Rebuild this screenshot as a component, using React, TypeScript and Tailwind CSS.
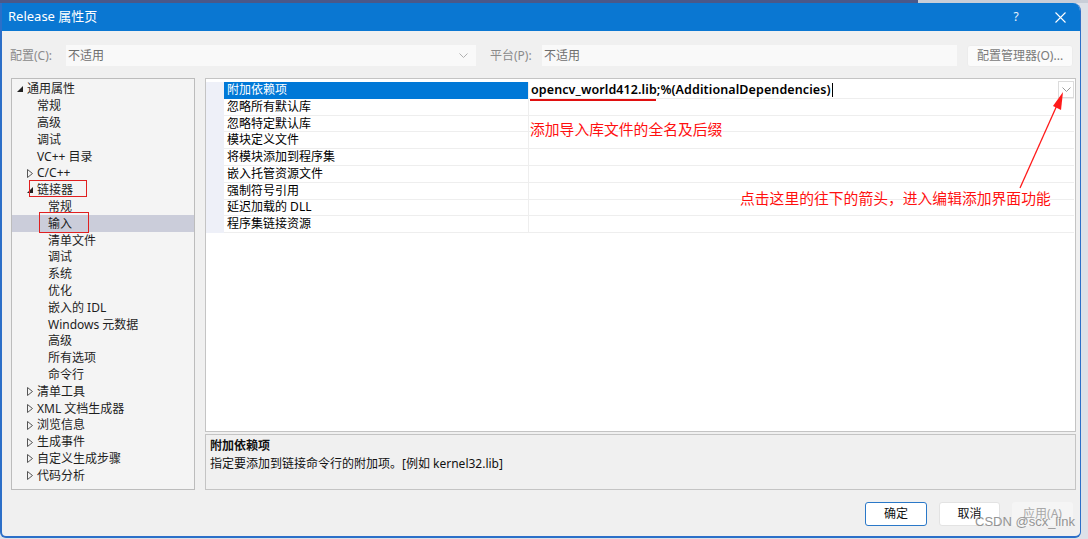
import React from 'react'

type TreeItem = { t: string; kind: 'root' | 'open' | 'closed' | 'leaf1' | 'leaf2' }

const treeItems: TreeItem[] = [
  { t: '通用属性', kind: 'root' },
  { t: '常规', kind: 'leaf1' },
  { t: '高级', kind: 'leaf1' },
  { t: '调试', kind: 'leaf1' },
  { t: 'VC++ 目录', kind: 'leaf1' },
  { t: 'C/C++', kind: 'closed' },
  { t: '链接器', kind: 'open' },
  { t: '常规', kind: 'leaf2' },
  { t: '输入', kind: 'leaf2' },
  { t: '清单文件', kind: 'leaf2' },
  { t: '调试', kind: 'leaf2' },
  { t: '系统', kind: 'leaf2' },
  { t: '优化', kind: 'leaf2' },
  { t: '嵌入的 IDL', kind: 'leaf2' },
  { t: 'Windows 元数据', kind: 'leaf2' },
  { t: '高级', kind: 'leaf2' },
  { t: '所有选项', kind: 'leaf2' },
  { t: '命令行', kind: 'leaf2' },
  { t: '清单工具', kind: 'closed' },
  { t: 'XML 文档生成器', kind: 'closed' },
  { t: '浏览信息', kind: 'closed' },
  { t: '生成事件', kind: 'closed' },
  { t: '自定义生成步骤', kind: 'closed' },
  { t: '代码分析', kind: 'closed' },
]

const props = [
  '附加依赖项',
  '忽略所有默认库',
  '忽略特定默认库',
  '模块定义文件',
  '将模块添加到程序集',
  '嵌入托管资源文件',
  '强制符号引用',
  '延迟加载的 DLL',
  '程序集链接资源',
]

function OpenTri() {
  return (
    <svg width="6" height="6" viewBox="0 0 6 6" className="shrink-0">
      <polygon points="6,0 6,6 0,6" fill="#222" />
    </svg>
  )
}

function ClosedTri() {
  return (
    <svg width="6" height="9" viewBox="0 0 6 9" className="shrink-0">
      <polygon points="0.5,0.5 5.5,4.5 0.5,8.5" fill="none" stroke="#555" strokeWidth="1" />
    </svg>
  )
}

function Chevron({ color = '#b0b0b0' }: { color?: string }) {
  return (
    <svg width="9" height="5" viewBox="0 0 9 5">
      <polyline points="0.5,0.5 4.5,4.5 8.5,0.5" fill="none" stroke={color} strokeWidth="1" />
    </svg>
  )
}

function TreeRow({ item, selected }: { item: TreeItem; selected: boolean }) {
  const base = 'h-[16.8px] flex items-center text-[12px] text-[#1e1e1e] whitespace-nowrap'
  const bg = selected ? ' bg-[#cbcdda]' : ''
  if (item.kind === 'root')
    return (
      <div className={base + bg + ' pl-[5px]'}>
        <div className="w-[10px] flex items-center"><OpenTri /></div>
        <span>{item.t}</span>
      </div>
    )
  if (item.kind === 'open')
    return (
      <div className={base + bg + ' pl-[15px]'}>
        <div className="w-[10px] flex items-center"><OpenTri /></div>
        <span>{item.t}</span>
      </div>
    )
  if (item.kind === 'closed')
    return (
      <div className={base + bg + ' pl-[15px]'}>
        <div className="w-[10px] flex items-center"><ClosedTri /></div>
        <span>{item.t}</span>
      </div>
    )
  if (item.kind === 'leaf1') return <div className={base + bg + ' pl-[25px]'}>{item.t}</div>
  return <div className={base + bg + ' pl-[36px]'}>{item.t}</div>
}

export default function App() {
  return (
    <div className="relative w-[1088px] h-[539px] overflow-hidden bg-[#dde1e8] font-['Noto_Sans','Noto_Sans_CJK_SC',sans-serif]">
      <div className="flex h-[3px]">
        <div className="w-[918px] bg-[#4a5889]" />
        <div className="flex-1 bg-[#c9ced8]" />
      </div>

      <div className="mr-[7px] h-[535px] flex flex-col overflow-hidden rounded-tr-[8px] rounded-b-[6px] border-l-2 border-b-2 border-r border-[#2c6fc8] bg-[#f0f0f0]">
        {/* title bar */}
        <div className="h-[28px] shrink-0 flex items-center bg-[#0a77d2] text-white">
          <span className="pl-[6px] text-[13px]">Release 属性页</span>
          <div className="ml-auto flex items-center gap-[8px] pr-[2px]">
            <span className="w-[36px] text-center text-[12px] text-[#e8f1fb]">?</span>
            <div className="w-[36px] flex justify-center">
              <svg width="11" height="11" viewBox="0 0 11 11">
                <path d="M0.5 0.5 L10.5 10.5 M10.5 0.5 L0.5 10.5" stroke="#fff" strokeWidth="1.1" />
              </svg>
            </div>
          </div>
        </div>

        {/* config row */}
        <div className="mt-[14px] h-[21px] flex items-center pl-[8px] text-[12px] text-[#8a8a8a]">
          <span className="w-[56px]">配置(C):</span>
          <div className="w-[410px] h-[21px] flex items-center justify-between bg-[#f9f9f9] px-[2px] text-[#6e6e6e]">
            <span>不适用</span>
            <span className="pr-[6px]"><Chevron /></span>
          </div>
          <span className="ml-[14px] w-[52px]">平台(P):</span>
          <div className="w-[415px] h-[21px] flex items-center bg-[#f9f9f9] px-[2px] text-[#6e6e6e]">
            <span>不适用</span>
          </div>
          <div className="ml-[10px] w-[106px] h-[22px] flex items-center justify-center rounded-[3px] border border-[#ececec] bg-[#fbfbfb] text-[#7a7a7a]">
            配置管理器(O)...
          </div>
        </div>

        {/* main area */}
        <div className="mt-[12px] flex pl-[9px]">
          <div className="w-[184px] h-[412px] border border-[#bcbcbc] bg-[#f4f4f4] pt-[2px]">
            {treeItems.map((it, i) => (
              <TreeRow key={i} item={it} selected={i === 8} />
            ))}
          </div>

          <div className="ml-[10px] w-[871px] flex flex-col gap-[2px]">
            <div className="h-[354px] border border-[#c4c4c4] bg-white pt-[3px] pr-[1px]">
              {props.map((p, i) => (
                <div key={i} className="h-[16.8px] flex text-[12px] text-black">
                  <div className="w-[18px] bg-[#eef0f8]" />
                  <div
                    className={
                      i === 0
                        ? 'w-[304px] flex items-center pl-[3px] bg-[#0078d7] text-white'
                        : 'w-[304px] flex items-center pl-[3px] border-b border-[#eeeeee]'
                    }
                  >
                    {p}
                  </div>
                  <div className="flex-1 flex items-center border-l border-b border-[#eeeeee] pl-[2px]">
                    {i === 0 && (
                      <>
                        <span className="font-semibold text-[12.5px] tracking-[0.1px]">
                          opencv_world412.lib;%(AdditionalDependencies)
                        </span>
                        <span className="ml-[1px] w-[1px] h-[14px] bg-black" />
                        <div className="ml-auto w-[16px] h-[17px] flex items-center justify-center border border-[#dcdcdc] bg-white">
                          <Chevron color="#999" />
                        </div>
                      </>
                    )}
                  </div>
                </div>
              ))}
            </div>
            <div className="h-[56px] border border-[#c4c4c4] bg-[#f0f0f0] px-[4px] pt-[2px] text-[12px] leading-[18px] text-[#111]">
              <div className="font-bold">附加依赖项</div>
              <div>指定要添加到链接命令行的附加项。[例如 kernel32.lib]</div>
            </div>
          </div>
        </div>

        {/* buttons */}
        <div className="mt-[12px] flex justify-end gap-[12px] pr-[7px] text-[12px]">
          <div className="w-[62px] h-[24px] flex items-center justify-center rounded-[3px] border border-[#2a78c8] bg-white text-[#111]">
            确定
          </div>
          <div className="w-[61px] h-[24px] flex items-center justify-center rounded-[3px] border border-[#e3e3e3] bg-white text-[#111]">
            取消
          </div>
          <div className="w-[61px] h-[24px] flex items-center justify-center rounded-[3px] bg-[#f5f5f5] text-[#a8a8a8]">
            应用(A)
          </div>
        </div>
      </div>

      {/* annotations */}
      <div className="absolute left-[29px] top-[180px] w-[58px] h-[17px] border border-[#e02020]" />
      <div className="absolute left-[39px] top-[212px] w-[50px] h-[21px] border border-[#e02020]" />
      <div className="absolute left-[530px] top-[99px] w-[126px] h-[2px] bg-[#e01010]" />
      <div className="absolute left-[530px] top-[118px] text-[14.8px] text-[#ff1010] whitespace-nowrap font-['Noto_Sans_CJK_SC',sans-serif] [text-shadow:0_0_2px_#fff,0_0_2px_#fff,1px_1px_1px_#fff]">
        添加导入库文件的全名及后缀
      </div>
      <div className="absolute left-[740px] top-[187px] text-[14.8px] text-[#ff1010] whitespace-nowrap font-['Noto_Sans_CJK_SC',sans-serif] [text-shadow:0_0_2px_#fff,0_0_2px_#fff,1px_1px_1px_#fff]">
        点击这里的往下的箭头，进入编辑添加界面功能
      </div>
      <svg className="absolute left-0 top-0" width="1088" height="539" viewBox="0 0 1088 539">
        <line x1="1020" y1="188" x2="1058" y2="103" stroke="#ff1a1a" strokeWidth="1.3" />
        <polygon points="1063,92 1061,110 1053,106" fill="#ff1a1a" />
      </svg>
      <div className="absolute left-[975px] top-[512px] text-[13px] text-[#8a8a8a] opacity-90 whitespace-nowrap font-['Liberation_Sans',sans-serif]">
        CSDN @scx_link
      </div>
    </div>
  )
}
